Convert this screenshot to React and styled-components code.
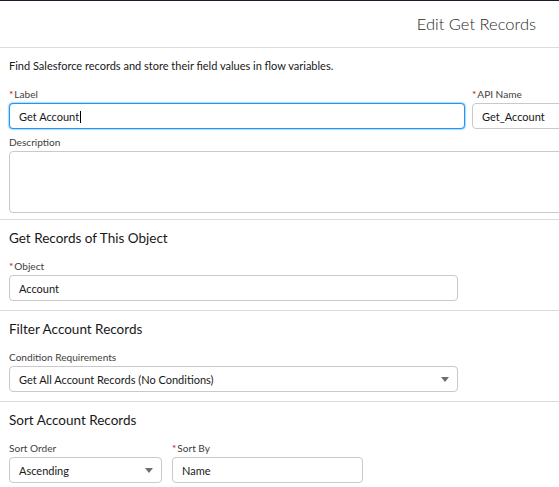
import styled, { createGlobalStyle } from 'styled-components'

const GlobalStyle = createGlobalStyle`
  html, body {
    margin: 0;
    padding: 0;
    background: #ffffff;
  }
  body {
    font-family: Lato, "Liberation Sans", sans-serif;
    color: #181818;
  }
`;

const Page = styled.div`
  width: 559px;
  height: 487px;
  overflow: hidden;
  background: #fff;
  border-top: 1px solid #16202c;
`;

const Header = styled.header`
  height: 46px;
  display: flex;
  align-items: center;
  justify-content: flex-end;
  padding-right: 23px;
  border-bottom: 1px solid #dddbda;
`;

const Title = styled.h2`
  margin: 0;
  font-size: 16.5px;
  font-weight: 300;
  color: #2b2826;
`;

const Section = styled.section`
  padding: 9px 0 ${p => p.$bottom || 9}px 9px;
  border-bottom: ${p => (p.$last ? 'none' : '1px solid #dddbda')};
`;

const Intro = styled.p`
  margin: 0 0 12px;
  font-size: 11px;
  line-height: 18px;
  color: #181818;
`;

const Heading = styled.h3`
  margin: 0 0 12px;
  font-size: 13.5px;
  font-weight: 400;
  line-height: 18px;
  color: #181818;
`;

const Row = styled.div`
  display: flex;
  gap: ${p => p.$gap || 7}px;
  margin-bottom: ${p => p.$mb || 0}px;
`;

const FieldGroup = styled.div`
  flex: none;
  width: ${p => p.$width}px;
`;

const Label = styled.label`
  display: block;
  height: 14px;
  line-height: 14px;
  margin-bottom: 2px;
  font-size: 10.1px;
  color: #3e3e3c;
`;

const Req = styled.abbr`
  color: #ba0517;
  text-decoration: none;
  margin-right: 1px;
`;

const Box = styled.div`
  box-sizing: border-box;
  height: ${p => p.$height || 26}px;
  display: flex;
  align-items: ${p => (p.$multiline ? 'flex-start' : 'center')};
  justify-content: space-between;
  padding: 0 8px 0 9px;
  border: 1px solid ${p => (p.$focused ? '#1b96ff' : '#c9c9c9')};
  border-radius: 4px;
  box-shadow: ${p => (p.$focused ? '0 0 2px #0176d3' : 'none')};
  font-size: 11px;
  color: #181818;
  background: #fff;
`;

const Value = styled.span`
  white-space: nowrap;
`;

const Caret = styled.span`
  display: inline-block;
  width: 1px;
  height: 12px;
  margin-left: 1px;
  background: #000;
  vertical-align: -2px;
`;

const Arrow = styled.span`
  width: 0;
  height: 0;
  border-left: 4px solid transparent;
  border-right: 4px solid transparent;
  border-top: 5px solid #706e6b;
`;

function Field({ label, required, width, children, ...box }) {
  return (
    <FieldGroup $width={width}>
      <Label>
        {required && <Req title="required">*</Req>}
        {label}
      </Label>
      <Box {...box}>{children}</Box>
    </FieldGroup>
  )
}

export default function App() {
  return (
    <>
      <GlobalStyle />
      <Page>
        <Header>
          <Title>Edit Get Records</Title>
        </Header>

        <Section $bottom={6}>
          <Intro>Find Salesforce records and store their field values in flow variables.</Intro>
          <Row $mb={6}>
            <Field label="Label" required width={456} $focused>
              <Value>Get Account<Caret /></Value>
            </Field>
            <Field label="API Name" required width={200}>
              <Value>Get_Account</Value>
            </Field>
          </Row>
          <Field label="Description" width={700} $height={62} $multiline />
        </Section>

        <Section>
          <Heading>Get Records of This Object</Heading>
          <Field label="Object" required width={449}>
            <Value>Account</Value>
          </Field>
        </Section>

        <Section>
          <Heading>Filter Account Records</Heading>
          <Field label="Condition Requirements" width={449}>
            <Value>Get All Account Records (No Conditions)</Value>
            <Arrow />
          </Field>
        </Section>

        <Section $last>
          <Heading>Sort Account Records</Heading>
          <Row $gap={10}>
            <Field label="Sort Order" width={153}>
              <Value>Ascending</Value>
              <Arrow />
            </Field>
            <Field label="Sort By" required width={191}>
              <Value>Name</Value>
            </Field>
          </Row>
        </Section>
      </Page>
    </>
  )
}
